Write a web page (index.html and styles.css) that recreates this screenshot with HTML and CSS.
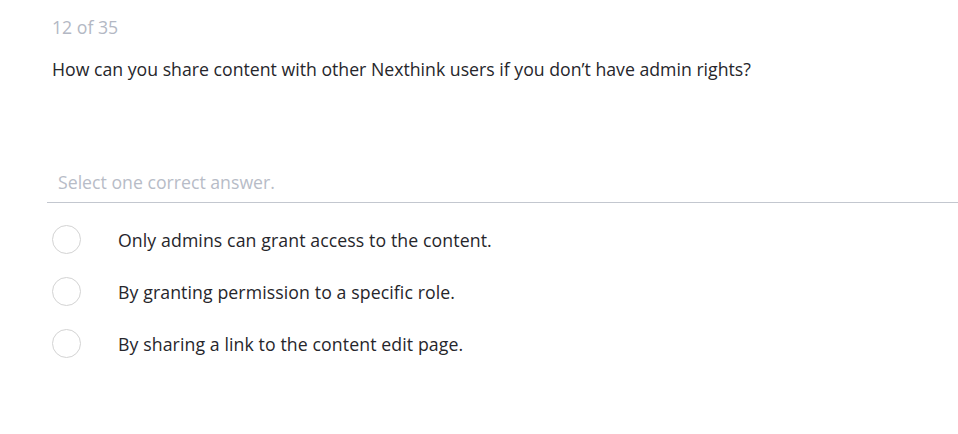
FILE: index.html
```html
<!DOCTYPE html>
<html>
<head>
<meta charset="utf-8">
<link rel="stylesheet" href="styles.css">
</head>
<body>
<div class="quiz">
  <div class="counter">12 of 35</div>
  <div class="question">How can you share content with other Nexthink users if you don’t have admin rights?</div>
  <div class="hint">Select one correct answer.</div>
  <ul class="answers">
    <li class="answer"><span class="radio"></span><span class="label">Only admins can grant access to the content.</span></li>
    <li class="answer"><span class="radio"></span><span class="label">By granting permission to a specific role.</span></li>
    <li class="answer"><span class="radio"></span><span class="label">By sharing a link to the content edit page.</span></li>
  </ul>
</div>
</body>
</html>
```
FILE: styles.css
```css
html, body {
  margin: 0;
  padding: 0;
  background: #ffffff;
}
body {
  font-family: "Open Sans", sans-serif;
  color: #26262b;
}
.quiz {
  padding: 15px 0 0 47px;
}
.counter {
  padding-left: 5px;
  font-size: 17.7px;
  line-height: 24px;
  color: #b3b8c4;
}
.question {
  margin-top: 18px;
  padding-left: 5px;
  font-size: 17.7px;
  line-height: 24px;
}
.hint {
  margin-top: 89px;
  padding: 0 0 8px 11px;
  font-size: 17.7px;
  line-height: 24px;
  color: #b7bcc7;
  border-bottom: 1px solid #c3c7cf;
}
.answers {
  list-style: none;
  margin: 0;
  padding: 22px 0 0 5px;
  display: flex;
  flex-direction: column;
  gap: 23px;
}
.answer {
  display: flex;
  align-items: center;
  height: 29px;
}
.radio {
  width: 27px;
  height: 27px;
  border: 1px solid #d3d3d3;
  border-radius: 50%;
  flex: none;
}
.label {
  margin-left: 37px;
  font-size: 17.7px;
  letter-spacing: 0.1px;
}
```
